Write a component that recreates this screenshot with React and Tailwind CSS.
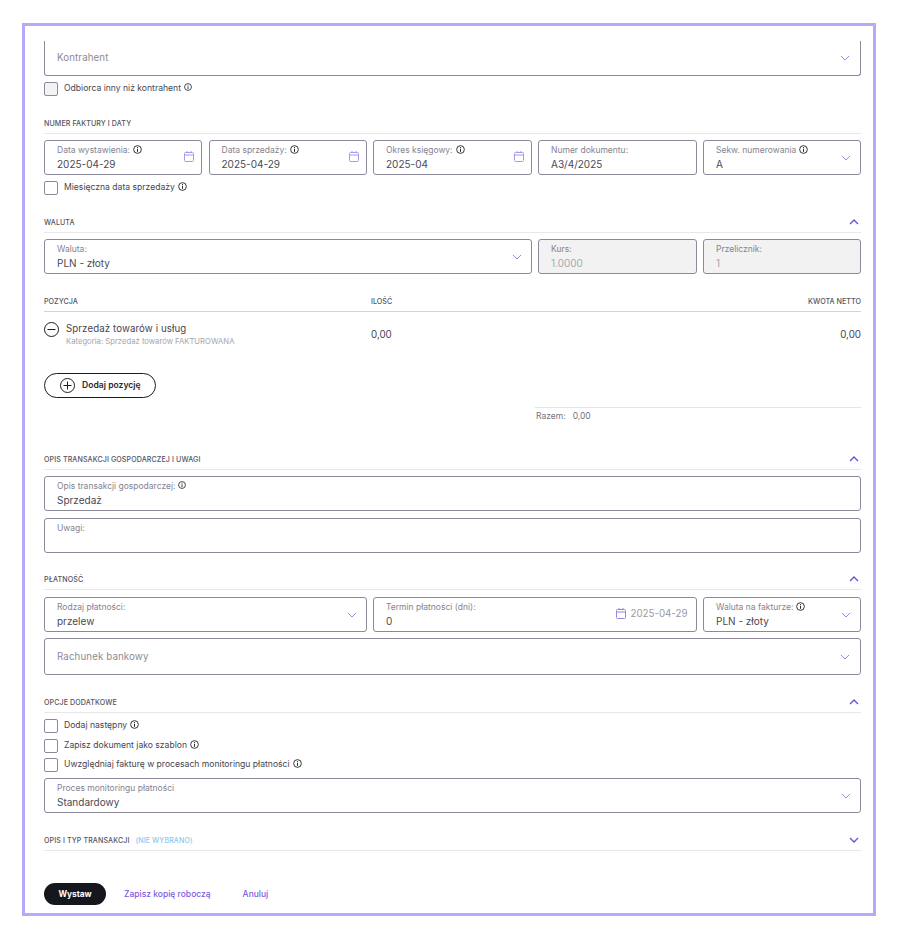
import React from "react";

const Info = ({ size = 9 }) => (
  <svg width={size} height={size} viewBox="0 0 10 10" fill="none" className="relative -top-px shrink-0 text-[#222]">
    <circle cx="5" cy="5" r="4.3" stroke="currentColor" strokeWidth="1" />
    <path d="M5 2.3v1M5 4.2v3.4" stroke="currentColor" strokeWidth="1.1" />
  </svg>
);

const Chevron = ({ up = false, strong = false }) => (
  <svg width="10" height="6" viewBox="0 0 10 6" fill="none" className="shrink-0">
    <path
      d={up ? "M1 5l4-4 4 4" : "M1 1l4 4 4-4"}
      stroke={strong ? "#6d4fd8" : "#8f7ce6"}
      strokeWidth={strong ? "1.4" : "0.9"}
    />
  </svg>
);

const Calendar = ({ color = "#a999ec", size = 10 }) => (
  <svg width={size} height={size + 1} viewBox="0 0 10 11" fill="none" className="relative -top-px -mr-[2px] shrink-0">
    <rect x="0.5" y="1.5" width="9" height="9" rx="1" stroke={color} />
    <path d="M0.5 4h9M3 0v2M7 0v2" stroke={color} />
  </svg>
);

function Field({ label, value, info, icon, disabled, className = "" }) {
  return (
    <div
      className={`flex h-[35px] items-center justify-between rounded-[3px] border border-[#8c8a9a] pl-[12px] pr-[9px] ${disabled ? "bg-[#f2f2f2]" : "bg-white"} ${className}`}
    >
      <div className="min-w-0 self-start pt-[2.5px]">
        <div className="flex h-[13px] items-center gap-[3px] text-[8.5px] leading-[13px] text-[#85838f]">
          {label}
          {info && <Info size={info === "small" ? 8 : 9} />}
        </div>
        <div className={`text-[10px] leading-[14px] ${disabled ? "text-[#a9a9b0]" : "text-[#4a4a54]"}`}>
          {value}
        </div>
      </div>
      {icon}
    </div>
  );
}

function Heading({ children, chevron, className = "" }) {
  return (
    <div className={`flex h-[15px] items-start justify-between border-b border-[#e8e8ea] ${className}`}>
      <div className="text-[7.1px] font-medium leading-[9px] tracking-[0.1px] text-[#55535f]">{children}</div>
      {chevron && (
        <div className="pr-[2px] pt-[1px]">
          <Chevron up={chevron === "up"} strong />
        </div>
      )}
    </div>
  );
}

function Check({ label, infoSize = 9, filled, className = "" }) {
  return (
    <div className={`flex h-[14px] items-start ${className}`}>
      <div className={`h-[14px] w-[14px] rounded-[2px] border border-[#8c8a9a] ${filled ? "bg-[#f3f3f3]" : "bg-white"}`} />
      <div className="ml-[6px] flex items-center gap-[3px] text-[8.6px] leading-[12px] text-[#45454f]">
        {label}
        <Info size={infoSize} />
      </div>
    </div>
  );
}

export default function App() {
  return (
    <div className="h-[936px] w-[906px] bg-white pl-[22px] pt-[23px] font-['Inter',sans-serif]">
      <div className="h-[893px] w-[854px] overflow-hidden border-[3px] border-[#b9a7fb] pl-[19px] pr-[12px] pt-[15px]">
        <div className="flex h-[35px] items-center justify-between rounded-b-[3px] border border-t-0 border-[#8c8a9a] pl-[12px] pr-[10px]">
          <span className="text-[9.75px] tracking-[0.1px] text-[#8d8b96]">Kontrahent</span>
          <Chevron />
        </div>
        <Check label="Odbiorca inny niż kontrahent" infoSize={8} filled className="mt-[6px]" />

        <Heading className="mt-[23px]">NUMER FAKTURY I DATY</Heading>
        <div className="mt-[6px] grid grid-cols-[158px_158px_158.5px_158.5px_158px] gap-[6.5px]">
          <Field label="Data wystawienia:" value="2025-04-29" info icon={<Calendar />} />
          <Field label="Data sprzedaży:" value="2025-04-29" info icon={<Calendar />} />
          <Field label="Okres księgowy:" value="2025-04" info icon={<Calendar />} />
          <Field label="Numer dokumentu:" value="A3/4/2025" />
          <Field label="Sekw. numerowania" value="A" info icon={<Chevron />} />
        </div>
        <Check label="Miesięczna data sprzedaży" className="mt-[6px]" />

        <Heading chevron="up" className="mt-[23px]">WALUTA</Heading>
        <div className="mt-[6px] grid grid-cols-[158px_158px_158.5px_158.5px_158px] gap-[6.5px]">
          <Field label="Waluta:" value="PLN - złoty" icon={<Chevron />} className="col-span-3" />
          <Field label="Kurs:" value="1.0000" disabled />
          <Field label="Przelicznik:" value="1" disabled />
        </div>

        <div className="mt-[23px] grid h-[15px] grid-cols-[327px_1fr_auto] border-b border-[#d4d4d8] text-[7.2px] font-medium leading-[9px] text-[#55535f]">
          <div>POZYCJA</div>
          <div>ILOŚĆ</div>
          <div>KWOTA NETTO</div>
        </div>
        <div className="mt-[9px] grid h-[27px] grid-cols-[327px_1fr_auto] items-center">
          <div className="flex items-start gap-[7px]">
            <svg width="15" height="15" viewBox="0 0 15 15" fill="none" className="shrink-0">
              <circle cx="7.5" cy="7.5" r="7" stroke="#1c1c22" />
              <path d="M3.5 7.5h8" stroke="#1c1c22" />
            </svg>
            <div>
              <div className="text-[9.7px] leading-[14px] tracking-[0.1px] text-[#45454f]">Sprzedaż towarów i usług</div>
              <div className="text-[7.7px] leading-[11px] text-[#a5a5ac]">Kategoria: Sprzedaż towarów FAKTUROWANA</div>
            </div>
          </div>
          <div className="mt-[2px] text-[9.75px] text-[#45454f]">0,00</div>
          <div className="mt-[2px] text-[9.75px] text-[#45454f]">0,00</div>
        </div>

        <button className="mt-[25px] flex h-[25px] w-[112px] items-center gap-[7px] rounded-full border border-[#1c1c22] pl-[15px] text-[8.6px] font-semibold text-[#2a2a32]">
          <svg width="15" height="15" viewBox="0 0 15 15" fill="none" className="shrink-0">
            <circle cx="7.5" cy="7.5" r="7" stroke="#1c1c22" />
            <path d="M3.5 7.5h8M7.5 3.5v8" stroke="#1c1c22" />
          </svg>
          Dodaj pozycję
        </button>

        <div className="ml-[491px] mt-[9px] flex h-[15px] items-end gap-[7px] border-t border-[#e4e4e7] pl-px text-[8.5px] leading-[11px] text-[#75737f]">
          <span>Razem:</span>
          <span>0,00</span>
        </div>

        <Heading chevron="up" className="mt-[33px]">OPIS TRANSAKCJI GOSPODARCZEJ I UWAGI</Heading>
        <Field label="Opis transakcji gospodarczej:" value="Sprzedaż" info="small" className="mt-[6px]" />
        <Field label="Uwagi:" value={"\u00a0"} className="mt-[7px]" />

        <Heading chevron="up" className="mt-[22px]">PŁATNOŚĆ</Heading>
        <div className="mt-[7px] grid grid-cols-[158px_158px_158.5px_158.5px_158px] gap-[6.5px]">
          <Field label="Rodzaj płatności:" value="przelew" icon={<Chevron />} className="col-span-2" />
          <Field
            label="Termin płatności (dni):"
            value="0"
            className="col-span-2 !pr-[8px]"
            icon={
              <div className="flex items-center gap-[6px] text-[9.75px] text-[#9a9aa2]">
                <Calendar color="#9a86e4" />
                2025-04-29
              </div>
            }
          />
          <Field label="Waluta na fakturze:" value="PLN - złoty" info icon={<Chevron />} />
        </div>
        <div className="mt-[6px] flex h-[37px] items-center justify-between rounded-[3px] border border-[#8c8a9a] pl-[12px] pr-[10px]">
          <span className="mt-[2px] text-[9.75px] tracking-[0.1px] text-[#8d8b96]">Rachunek bankowy</span>
          <Chevron />
        </div>

        <Heading chevron="up" className="mt-[23px]">OPCJE DODATKOWE</Heading>
        <Check label="Dodaj następny" className="mt-[6px]" />
        <Check label="Zapisz dokument jako szablon" className="mt-[6px]" />
        <Check label="Uwzględniaj fakturę w procesach monitoringu płatności" className="mt-[5px]" />
        <Field label="Proces monitoringu płatności" value="Standardowy" icon={<Chevron />} className="mt-[6px]" />

        <Heading chevron="down" className="mt-[23px]">
          OPIS I TYP TRANSAKCJI
          <span className="ml-[6px] text-[#8ec6ee]">(NIE WYBRANO)</span>
        </Heading>

        <div className="mt-[32px] flex items-center">
          <button className="h-[22px] w-[62px] rounded-full bg-[#16161d] text-[8.3px] font-bold text-white">Wystaw</button>
          <span className="ml-[18px] text-[8.5px] font-medium text-[#7c5ce0]">Zapisz kopię roboczą</span>
          <span className="ml-[32px] text-[8.5px] font-medium text-[#7c5ce0]">Anuluj</span>
        </div>
      </div>
    </div>
  );
}
